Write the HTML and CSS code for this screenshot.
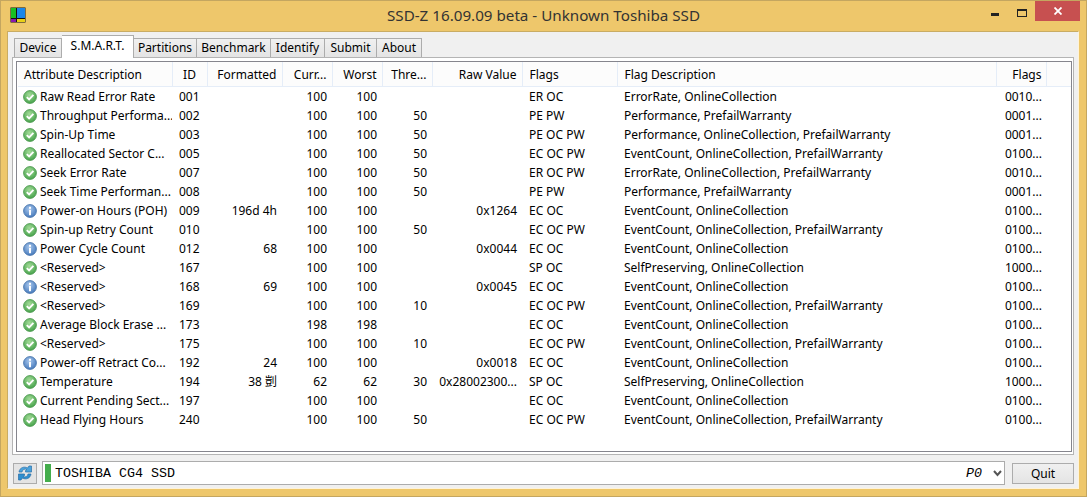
FILE: index.html
```html
<!DOCTYPE html>
<html>
<head>
	<meta http-equiv="Content-Type" content="text/html; charset=UTF-8">
	<title>SSD-Z</title>
	<link rel="stylesheet" href="styles.css">
</head>
<body>
	<svg class="defs" width="0" height="0">
		<defs>
			<radialGradient id="g_ok" cx="45%" cy="35%" r="70%">
				<stop offset="0" stop-color="#a5dc9a"/>
				<stop offset="1" stop-color="#3f9f45"/>
			</radialGradient>
			<radialGradient id="g_info" cx="45%" cy="35%" r="70%">
				<stop offset="0" stop-color="#a9c8ee"/>
				<stop offset="1" stop-color="#3f74b8"/>
			</radialGradient>
			<symbol id="ok" viewBox="0 0 14 14">
				<circle cx="7" cy="7" r="6.4" fill="url(#g_ok)" stroke="#4d9a50" stroke-width="0.9"/>
				<path d="M3.8 7.2 L6.1 9.5 L10.4 4.9" fill="none" stroke="#fff" stroke-width="1.9"/>
			</symbol>
			<symbol id="info" viewBox="0 0 14 14">
				<circle cx="7" cy="7" r="6.4" fill="url(#g_info)" stroke="#4a76ad" stroke-width="0.9"/>
				<rect x="6" y="2.8" width="2" height="2" fill="#fff"/>
				<rect x="6" y="5.8" width="2" height="5.4" fill="#fff"/>
			</symbol>
		</defs>
	</svg>
	<div class="window">
		<div class="titlebar">
			<div class="title_left">
				<svg class="app_icon" width="16" height="16" viewBox="0 0 16 16">
					<rect x="0.5" y="0.5" width="15" height="15" fill="#111"/>
					<rect x="1" y="1" width="5" height="10" fill="#18c020"/>
					<rect x="7" y="1" width="8" height="10" fill="#1a86e8"/>
					<rect x="1" y="12" width="5" height="3" fill="#8a18b0"/>
					<rect x="7" y="12" width="8" height="3" fill="#e8d018"/>
				</svg>
			</div>
			<div class="title_text">SSD-Z 16.09.09 beta - Unknown Toshiba SSD</div>
			<div class="title_btns">
				<div class="btn_min"></div>
				<div class="btn_max"></div>
				<div class="btn_close">
					<svg width="8" height="8" viewBox="0 0 8 8"><path d="M0.5 0.5 L7.5 7.5 M7.5 0.5 L0.5 7.5" stroke="#fff" stroke-width="1.8"/></svg>
				</div>
			</div>
		</div>
		<div class="client">
			<div class="tabs">
				<div class="tab tab_device">Device</div>
				<div class="tab tab_on">S.M.A.R.T.</div>
				<div class="tab tab_partitions">Partitions</div>
				<div class="tab tab_benchmark">Benchmark</div>
				<div class="tab tab_identify">Identify</div>
				<div class="tab tab_submit">Submit</div>
				<div class="tab tab_about">About</div>
			</div>
			<div class="panel">
				<div class="list">
					<table class="smart">
						<colgroup>
							<col class="c_attr"><col class="c_id"><col class="c_fmt"><col class="c_num"><col class="c_num"><col class="c_num"><col class="c_raw"><col class="c_flags"><col class="c_desc"><col class="c_num"><col>
						</colgroup>
						<thead>
							<tr>
								<th class="left">Attribute Description</th>
								<th class="center">ID</th>
								<th class="right">Formatted</th>
								<th class="right">Curr...</th>
								<th class="right">Worst</th>
								<th class="right">Thre...</th>
								<th class="right">Raw Value</th>
								<th class="left">Flags</th>
								<th class="left">Flag Description</th>
								<th class="right">Flags</th>
								<th></th>
							</tr>
						</thead>
						<tbody>
							<tr><td class="attr"><svg class="ico"><use href="#ok"/></svg>Raw Read Error Rate</td><td class="id">001</td><td class="right"></td><td class="right">100</td><td class="right">100</td><td class="right"></td><td class="right"></td><td>ER OC</td><td>ErrorRate, OnlineCollection</td><td class="right">0010...</td><td></td></tr>
							<tr><td class="attr"><svg class="ico"><use href="#ok"/></svg>Throughput Performa...</td><td class="id">002</td><td class="right"></td><td class="right">100</td><td class="right">100</td><td class="right">50</td><td class="right"></td><td>PE PW</td><td>Performance, PrefailWarranty</td><td class="right">0001...</td><td></td></tr>
							<tr><td class="attr"><svg class="ico"><use href="#ok"/></svg>Spin-Up Time</td><td class="id">003</td><td class="right"></td><td class="right">100</td><td class="right">100</td><td class="right">50</td><td class="right"></td><td>PE OC PW</td><td>Performance, OnlineCollection, PrefailWarranty</td><td class="right">0001...</td><td></td></tr>
							<tr><td class="attr"><svg class="ico"><use href="#ok"/></svg>Reallocated Sector C...</td><td class="id">005</td><td class="right"></td><td class="right">100</td><td class="right">100</td><td class="right">50</td><td class="right"></td><td>EC OC PW</td><td>EventCount, OnlineCollection, PrefailWarranty</td><td class="right">0100...</td><td></td></tr>
							<tr><td class="attr"><svg class="ico"><use href="#ok"/></svg>Seek Error Rate</td><td class="id">007</td><td class="right"></td><td class="right">100</td><td class="right">100</td><td class="right">50</td><td class="right"></td><td>ER OC PW</td><td>ErrorRate, OnlineCollection, PrefailWarranty</td><td class="right">0010...</td><td></td></tr>
							<tr><td class="attr"><svg class="ico"><use href="#ok"/></svg>Seek Time Performan...</td><td class="id">008</td><td class="right"></td><td class="right">100</td><td class="right">100</td><td class="right">50</td><td class="right"></td><td>PE PW</td><td>Performance, PrefailWarranty</td><td class="right">0001...</td><td></td></tr>
							<tr><td class="attr"><svg class="ico"><use href="#info"/></svg>Power-on Hours (POH)</td><td class="id">009</td><td class="right">196d 4h</td><td class="right">100</td><td class="right">100</td><td class="right"></td><td class="right">0x1264</td><td>EC OC</td><td>EventCount, OnlineCollection</td><td class="right">0100...</td><td></td></tr>
							<tr><td class="attr"><svg class="ico"><use href="#ok"/></svg>Spin-up Retry Count</td><td class="id">010</td><td class="right"></td><td class="right">100</td><td class="right">100</td><td class="right">50</td><td class="right"></td><td>EC OC PW</td><td>EventCount, OnlineCollection, PrefailWarranty</td><td class="right">0100...</td><td></td></tr>
							<tr><td class="attr"><svg class="ico"><use href="#info"/></svg>Power Cycle Count</td><td class="id">012</td><td class="right">68</td><td class="right">100</td><td class="right">100</td><td class="right"></td><td class="right">0x0044</td><td>EC OC</td><td>EventCount, OnlineCollection</td><td class="right">0100...</td><td></td></tr>
							<tr><td class="attr"><svg class="ico"><use href="#ok"/></svg>&lt;Reserved&gt;</td><td class="id">167</td><td class="right"></td><td class="right">100</td><td class="right">100</td><td class="right"></td><td class="right"></td><td>SP OC</td><td>SelfPreserving, OnlineCollection</td><td class="right">1000...</td><td></td></tr>
							<tr><td class="attr"><svg class="ico"><use href="#info"/></svg>&lt;Reserved&gt;</td><td class="id">168</td><td class="right">69</td><td class="right">100</td><td class="right">100</td><td class="right"></td><td class="right">0x0045</td><td>EC OC</td><td>EventCount, OnlineCollection</td><td class="right">0100...</td><td></td></tr>
							<tr><td class="attr"><svg class="ico"><use href="#ok"/></svg>&lt;Reserved&gt;</td><td class="id">169</td><td class="right"></td><td class="right">100</td><td class="right">100</td><td class="right">10</td><td class="right"></td><td>EC OC PW</td><td>EventCount, OnlineCollection, PrefailWarranty</td><td class="right">0100...</td><td></td></tr>
							<tr><td class="attr"><svg class="ico"><use href="#ok"/></svg>Average Block Erase ...</td><td class="id">173</td><td class="right"></td><td class="right">198</td><td class="right">198</td><td class="right"></td><td class="right"></td><td>EC OC</td><td>EventCount, OnlineCollection</td><td class="right">0100...</td><td></td></tr>
							<tr><td class="attr"><svg class="ico"><use href="#ok"/></svg>&lt;Reserved&gt;</td><td class="id">175</td><td class="right"></td><td class="right">100</td><td class="right">100</td><td class="right">10</td><td class="right"></td><td>EC OC PW</td><td>EventCount, OnlineCollection, PrefailWarranty</td><td class="right">0100...</td><td></td></tr>
							<tr><td class="attr"><svg class="ico"><use href="#info"/></svg>Power-off Retract Co...</td><td class="id">192</td><td class="right">24</td><td class="right">100</td><td class="right">100</td><td class="right"></td><td class="right">0x0018</td><td>EC OC</td><td>EventCount, OnlineCollection</td><td class="right">0100...</td><td></td></tr>
							<tr><td class="attr"><svg class="ico"><use href="#ok"/></svg>Temperature</td><td class="id">194</td><td class="right">38 剴</td><td class="right">62</td><td class="right">62</td><td class="right">30</td><td class="right">0x28002300...</td><td>SP OC</td><td>SelfPreserving, OnlineCollection</td><td class="right">1000...</td><td></td></tr>
							<tr><td class="attr"><svg class="ico"><use href="#ok"/></svg>Current Pending Sect...</td><td class="id">197</td><td class="right"></td><td class="right">100</td><td class="right">100</td><td class="right"></td><td class="right"></td><td>EC OC</td><td>EventCount, OnlineCollection</td><td class="right">0100...</td><td></td></tr>
							<tr><td class="attr"><svg class="ico"><use href="#ok"/></svg>Head Flying Hours</td><td class="id">240</td><td class="right"></td><td class="right">100</td><td class="right">100</td><td class="right">50</td><td class="right"></td><td>EC OC PW</td><td>EventCount, OnlineCollection, PrefailWarranty</td><td class="right">0100...</td><td></td></tr>
						</tbody>
					</table>
				</div>
			</div>
			<div class="bottom">
				<div class="refresh">
					<svg width="16" height="16" viewBox="0 0 16 16">
						<path d="M2 7 C2.5 2.5 7.5 1 10.5 3 L12 1 L14.5 1 L14.5 7 L8.5 7 L8.5 5.5 L10 4.5 C7.5 3.5 5.5 4.5 5 7 Z" fill="#4aa3dc" stroke="#2a6ea8" stroke-width="0.7"/>
						<path d="M14 9 C13.5 13.5 8.5 15 5.5 13 L4 15 L1.5 15 L1.5 9 L7.5 9 L7.5 10.5 L6 11.5 C8.5 12.5 10.5 11.5 11 9 Z" fill="#2f8fd0" stroke="#2a6ea8" stroke-width="0.7"/>
					</svg>
				</div>
				<div class="combo">
					<div class="led"></div>
					<div class="drive">TOSHIBA CG4 SSD</div>
					<div class="port">P0</div>
					<svg class="arrow" width="9" height="7" viewBox="0 0 9 7"><path d="M1 1 L4.5 5 L8 1" fill="none" stroke="#555" stroke-width="2"/></svg>
				</div>
				<div class="quit">Quit</div>
			</div>
		</div>
	</div>
</body>
</html>
```
FILE: styles.css
```css
html, body
{
	margin: 0;
	padding: 0;
	height: 100%;
	overflow: hidden;
}
.defs
{
	display: block;
	height: 0;
}
.window
{
	box-sizing: border-box;
	width: 1087px;
	height: 497px;
	display: flex;
	flex-direction: column;
	background-color: #eec76b;
	border: 1px solid #c4a660;
	font-family: "Noto Sans", "Noto Sans CJK TC", sans-serif;
	font-size: 12px;
	color: #000;
}
.titlebar
{
	height: 30px;
	display: grid;
	grid-template-columns: 1fr auto 1fr;
	flex: none;
}
.title_left
{
	padding: 6px 0 0 9px;
}
.app_icon
{
	display: block;
}
.title_text
{
	font-size: 15.2px;
	line-height: 29px;
	color: #333;
}
.title_btns
{
	display: flex;
	justify-content: flex-end;
	align-items: flex-start;
	padding-right: 6px;
}
.btn_min
{
	width: 8px;
	height: 3px;
	margin: 12px 18px 0 0;
	background-color: #222;
}
.btn_max
{
	box-sizing: border-box;
	width: 10px;
	height: 8px;
	margin: 8px 8px 0 0;
	border: 1px solid #222;
	border-top-width: 2px;
}
.btn_close
{
	width: 45px;
	height: 20px;
	background-color: #c75050;
	display: flex;
	align-items: center;
	justify-content: center;
}
.client
{
	flex: 1;
	display: flex;
	flex-direction: column;
	margin: 0 7px 7px 6px;
	padding: 2px 4px 0 4px;
	background-color: #f0f0f0;
	border: 1px solid #c9ac63;
	border-right-color: #fff3d8;
	border-bottom-color: #fff3d8;
	min-height: 0;
}
.tabs
{
	display: flex;
	align-items: flex-end;
	height: 23px;
	padding-left: 2px;
	flex: none;
}
.tab
{
	height: 19px;
	line-height: 18px;
	text-align: center;
	box-sizing: border-box;
	background: linear-gradient(#f0f0f0, #e4e4e4);
	border: 1px solid #acacac;
	border-left-width: 0;
	border-bottom: none;
}
.tab_device
{
	width: 48px;
	border-left-width: 1px;
}
.tab_on
{
	width: 72px;
	height: 23px;
	line-height: 20px;
	background: #fff;
	position: relative;
	top: 1px;
	z-index: 1;
}
.tab_partitions { width: 63px; }
.tab_benchmark { width: 74px; }
.tab_identify { width: 54px; }
.tab_submit { width: 52px; }
.tab_about { width: 45px; }
.panel
{
	box-sizing: border-box;
	height: 398px;
	flex: none;
	padding: 3px 1px 2px 3px;
	background-color: #fff;
	border: 1px solid #b4b4b4;
}
.list
{
	box-sizing: border-box;
	height: 100%;
	border: 1px solid #85858d;
	padding-left: 1px;
	background-color: #fff;
	overflow: hidden;
}
.smart
{
	width: 100%;
	table-layout: fixed;
	border-collapse: collapse;
}
.c_attr { width: 154px; }
.c_id { width: 35px; }
.c_fmt { width: 75px; }
.c_num { width: 50px; }
.c_raw { width: 90px; }
.c_flags { width: 95px; }
.c_desc { width: 379px; }
.smart th
{
	height: 24px;
	padding: 0 6px;
	font-weight: normal;
	background-color: #fcfcfc;
	border-right: 1px solid #e5edf8;
	border-bottom: 1px solid #e5edf8;
}
.smart th:last-child
{
	border-right: none;
}
.smart td
{
	height: 19px;
	padding: 0 6px;
	white-space: nowrap;
	overflow: hidden;
	line-height: 19px;
}
.left { text-align: left; }
.center { text-align: center; }
.right { text-align: right; }
.smart .right
{
	padding-right: 5px;
}
.smart tr > :nth-child(8), .smart tr > :nth-child(9)
{
	padding-left: 7px;
}
.smart tr > :nth-child(10)
{
	padding-right: 4px;
}
.smart td.attr
{
	padding-left: 5px;
}
.smart td.id
{
	padding-left: 7px;
}
.ico
{
	width: 14px;
	height: 14px;
	vertical-align: -3px;
	margin-right: 3px;
}
.bottom
{
	display: flex;
	align-items: center;
	flex: none;
	height: 24px;
	margin-top: 6px;
	padding-left: 1px;
}
.refresh
{
	box-sizing: border-box;
	width: 24px;
	height: 21px;
	margin-right: 5px;
	display: flex;
	align-items: center;
	justify-content: center;
	background-color: #e4e4e4;
	border: 1px solid #acacac;
}
.combo
{
	box-sizing: border-box;
	width: 963px;
	height: 24px;
	margin-right: 7px;
	display: flex;
	align-items: center;
	background-color: #fff;
	border: 1px solid #acacac;
	padding: 0 2px 0 2px;
	font-family: "Liberation Mono", monospace;
	font-size: 13.33px;
}
.led
{
	width: 6px;
	height: 18px;
	background-color: #44ad4c;
	margin-right: 4px;
}
.drive
{
	flex: 1;
}
.port
{
	font-style: italic;
	margin-right: 11px;
}
.quit
{
	box-sizing: border-box;
	width: 62px;
	height: 21px;
	line-height: 19px;
	text-align: center;
	background: linear-gradient(#f0f0f0, #e4e4e4);
	border: 1px solid #acacac;
}
```
